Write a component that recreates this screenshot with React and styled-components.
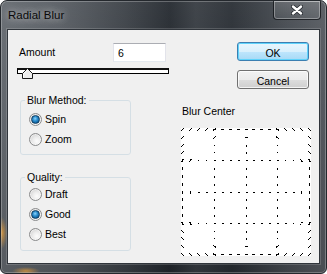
import React from 'react';
import styled, { createGlobalStyle, css } from 'styled-components';

const Global = createGlobalStyle`
  html, body { margin: 0; padding: 0; background: #ffffff; }
  body { font-family: "Liberation Sans", Arial, sans-serif; }
  * { box-sizing: border-box; }
`;

const Window = styled.div`
  width: 327px;
  height: 274px;
  display: flex;
  flex-direction: column;
  border: 1px solid #24282d;
  border-radius: 7px 7px 6px 6px;
  box-shadow: inset 0 0 0 1px rgba(255, 255, 255, 0.26);
  padding-bottom: 9px;
  overflow: hidden;
  background:
    radial-gradient(5px 16px at 1px 232px, rgba(214, 150, 62, 0.9), rgba(214, 150, 62, 0) 100%),
    radial-gradient(14px 4px at 25px 270px, rgba(214, 150, 62, 0.8), rgba(214, 150, 62, 0) 100%),
    linear-gradient(180deg, rgba(255, 255, 255, 0.06) 0%, rgba(0, 0, 0, 0) 40%, rgba(0, 0, 0, 0.12) 100%),
    linear-gradient(90deg, #63686e 0%, #575c62 18%, #3b4046 38%, #23282e 52%, #363b41 60%, #282d33 71%, #454a50 88%, #565a60 100%);
`;

const TitleBar = styled.div`
  height: 28px;
  flex: none;
  display: flex;
  justify-content: space-between;
  align-items: flex-start;
  padding-left: 7px;
`;

const Title = styled.div`
  margin-top: 7px;
  font-size: 11.5px;
  line-height: 14px;
  color: #0a0a0a;
  text-shadow: 0 0 7px rgba(255, 255, 255, 0.6), 0 0 12px rgba(255, 255, 255, 0.45);
`;

const CloseButton = styled.div`
  width: 48px;
  height: 20px;
  margin-top: -1px;
  margin-right: 5px;
  display: flex;
  align-items: center;
  justify-content: center;
  border: 1px solid rgba(10, 12, 16, 0.75);
  border-radius: 0 0 4px 4px;
  box-shadow: inset 0 0 0 1px rgba(255, 255, 255, 0.32);
  background: linear-gradient(180deg, rgba(255, 255, 255, 0.14), rgba(255, 255, 255, 0.04));
`;

const Client = styled.div`
  flex: 1;
  margin: 0 6px;
  display: flex;
  border: 1px solid #30353b;
  box-shadow: 0 0 0 1px rgba(255, 255, 255, 0.16);
  background: #f0f0f0;
  font-size: 10.5px;
  line-height: 13px;
  color: #000;
`;

const LeftColumn = styled.div`
  width: 161px;
  padding: 13px 0 0 9px;
  display: flex;
  flex-direction: column;
`;

const RightColumn = styled.div`
  width: 130px;
  margin-left: 12px;
  padding-top: 12px;
  display: flex;
  flex-direction: column;
`;

const AmountRow = styled.div`
  width: 152px;
  height: 19px;
  padding: 0 3px 0 2px;
  display: flex;
  align-items: center;
  justify-content: space-between;
`;

const NumberInput = styled.input`
  width: 53px;
  height: 19px;
  margin: 0;
  padding: 1px 0 0 4px;
  border: 1px solid;
  border-color: #abadb3 #e2e3ea #e3e9ef #e2e3ea;
  background: #fff;
  color: #000;
  font-family: "Liberation Sans", Arial, sans-serif;
  font-size: 10.5px;
  line-height: 15px;
  outline: none;
`;

const Slider = styled.div`
  position: relative;
  width: 152px;
  height: 11px;
  margin-top: 6px;
`;

const Track = styled.div`
  height: 6px;
  border: 1px solid #000;
  border-top: 2px solid #111;
  background: #fff;
`;

const Thumb = styled.svg`
  position: absolute;
  top: 0;
  display: block;
`;

const Group = styled.fieldset`
  width: 111px;
  margin: ${p => p.$mt}px 0 0 3px;
  padding: ${p => p.$pt}px 0 ${p => p.$pb}px 8px;
  border: 1px solid #d5dfe5;
  border-radius: 3px;
  min-width: 0;
`;

const Legend = styled.legend`
  margin-left: -4px;
  padding: 0 2px;
  font-size: 10.5px;
  line-height: 13px;
`;

const RadioRow = styled.label`
  height: 20px;
  display: flex;
  align-items: center;
  gap: 3px;
`;

const RadioMark = styled.span`
  flex: none;
  width: 13px;
  height: 13px;
  border-radius: 50%;
  border: 1px solid #8a8b8c;
  display: flex;
  align-items: center;
  justify-content: center;
  background: radial-gradient(circle at 62% 65%, #fdfdfd 0%, #ececec 40%, #cfcfcf 85%, #c2c2c2 100%);
  box-shadow: inset 0 0 0 1px rgba(255, 255, 255, 0.55);
  ${p => p.$checked && css`
    &::after {
      content: '';
      width: 7px;
      height: 7px;
      border-radius: 50%;
      border: 1px solid #123f63;
      background: radial-gradient(circle at 45% 38%, #8fd4fa 0%, #2c8fd0 38%, #0c5d98 75%, #083f6a 100%);
    }
  `}
`;

const DialogButton = styled.div`
  width: 72px;
  height: 19px;
  margin: ${p => p.$mt}px 2px 0 0;
  align-self: flex-end;
  display: flex;
  justify-content: center;
  padding-top: 2px;
  line-height: 16px;
  border-radius: 3px;
  border: 1px solid ${p => (p.$default ? '#3c7fb1' : '#707070')};
  background: ${p =>
    p.$default
      ? 'linear-gradient(180deg, #e9f6fd 0%, #d9f0fc 50%, #bee6fd 50%, #a7d9f5 100%)'
      : 'linear-gradient(180deg, #f2f2f2 0%, #ebebeb 50%, #dddddd 50%, #cfcfcf 100%)'};
  box-shadow: inset 0 0 0 1px ${p => (p.$default ? '#5fd3fb' : 'rgba(255,255,255,0.75)')};
`;

const CenterLabel = styled.div`
  margin: 16px 0 0 1px;
`;

const Preview = styled.svg`
  display: block;
  margin-top: 10px;
  background: #fff;
`;

function buildDashes() {
  const px = i => 1.5 + Math.round((i * 127) / 16);
  const py = j => 1.5 + Math.round((j * 125) / 16);
  const cx = px(8);
  const cy = py(8);
  const a = 0.022;
  const segs = [];
  const f = v => v.toFixed(2);
  const add = (x, y, horiz) => {
    const dx = x - cx;
    const dy = y - cy;
    const r = Math.hypot(dx, dy);
    if (2 * a * r < 2.2) {
      if (horiz) segs.push(`M${f(x - 1)} ${f(y)}L${f(x + 1)} ${f(y)}`);
      else segs.push(`M${f(x)} ${f(y - 1)}L${f(x)} ${f(y + 1)}`);
      return;
    }
    const t = Math.atan2(dy, dx);
    const pts = [-a, 0, a].map(k => [cx + r * Math.cos(t + k), cy + r * Math.sin(t + k)]);
    segs.push(`M${f(pts[0][0])} ${f(pts[0][1])}L${f(pts[1][0])} ${f(pts[1][1])}L${f(pts[2][0])} ${f(pts[2][1])}`);
  };
  for (let j = 0; j <= 16; j += 4) {
    for (let i = 0; i <= 16; i++) add(px(i), py(j), true);
  }
  for (let i = 0; i <= 16; i += 4) {
    for (let j = 0; j <= 16; j++) {
      if (j % 4 !== 0) add(px(i), py(j), false);
    }
  }
  return segs.join('');
}

const DASHES = buildDashes();

function Radio({ checked, children }) {
  return (
    <RadioRow>
      <RadioMark $checked={checked} />
      <span>{children}</span>
    </RadioRow>
  );
}

export default function App() {
  const amount = 6;
  const thumbLeft = Math.round(((amount - 1) / 99) * 138) - 2;
  return (
    <>
      <Global />
      <Window>
        <TitleBar>
          <Title>Radial Blur</Title>
          <CloseButton>
            <svg width="12" height="10" viewBox="0 0 12 10">
              <path d="M2 1.5L10 8.5M10 1.5L2 8.5" stroke="#23272c" strokeWidth="4" strokeLinecap="round" />
              <path d="M2 1.5L10 8.5M10 1.5L2 8.5" stroke="#ffffff" strokeWidth="2.4" strokeLinecap="round" />
            </svg>
          </CloseButton>
        </TitleBar>
        <Client>
          <LeftColumn>
            <AmountRow>
              <span>Amount</span>
              <NumberInput defaultValue={String(amount)} readOnly />
            </AmountRow>
            <Slider>
              <Track />
              <Thumb width="11" height="11" viewBox="0 0 11 11" style={{ left: thumbLeft }}>
                <polygon points="0.5,10.5 0.5,5.5 5.5,0.5 10.5,5.5 10.5,10.5" fill="#ededed" stroke="#1a1a1a" strokeWidth="1" />
                <polyline points="1.5,9.5 1.5,6 5.5,2" fill="none" stroke="#ffffff" strokeWidth="1" />
              </Thumb>
            </Slider>
            <Group $mt={15} $pt={2} $pb={5}>
              <Legend>Blur Method:</Legend>
              <Radio checked>Spin</Radio>
              <Radio>Zoom</Radio>
            </Group>
            <Group $mt={16} $pt={0} $pb={6}>
              <Legend>Quality:</Legend>
              <Radio>Draft</Radio>
              <Radio checked>Good</Radio>
              <Radio>Best</Radio>
            </Group>
          </LeftColumn>
          <RightColumn>
            <DialogButton $default $mt={0}>OK</DialogButton>
            <DialogButton $mt={9}>Cancel</DialogButton>
            <CenterLabel>Blur Center</CenterLabel>
            <Preview width="130" height="128" viewBox="0 0 130 128">
              <path d={DASHES} stroke="#000" strokeWidth="1" strokeLinecap="butt" strokeLinejoin="miter" fill="none" shapeRendering="crispEdges" />
            </Preview>
          </RightColumn>
        </Client>
      </Window>
    </>
  );
}
